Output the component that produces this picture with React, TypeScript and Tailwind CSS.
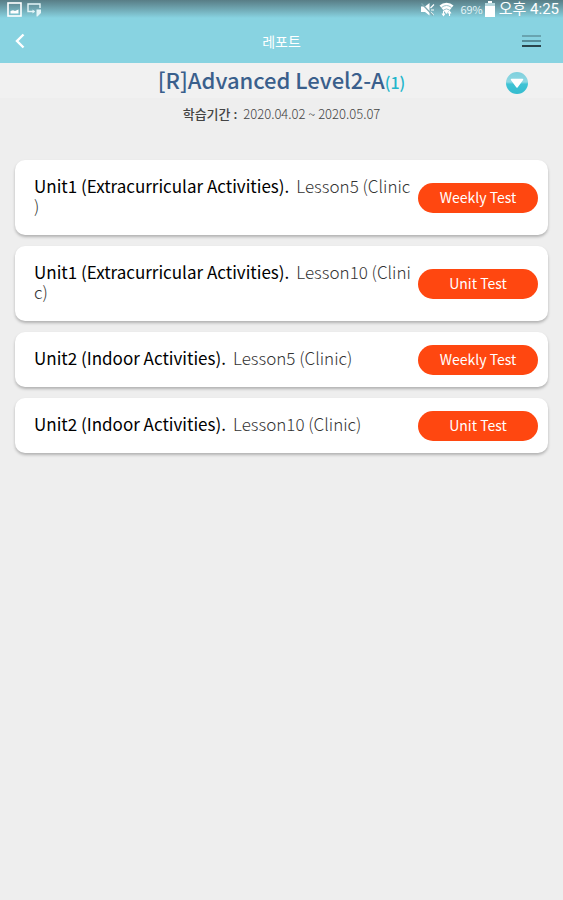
import React, { useState } from "react";

interface Report {
  id: number;
  unit: string;
  lesson: string;
  test: string;
}

const reports: Report[] = [
  { id: 1, unit: "Unit1 (Extracurricular Activities).", lesson: "Lesson5 (Clinic)", test: "Weekly Test" },
  { id: 2, unit: "Unit1 (Extracurricular Activities).", lesson: "Lesson10 (Clinic)", test: "Unit Test" },
  { id: 3, unit: "Unit2 (Indoor Activities).", lesson: "Lesson5 (Clinic)", test: "Weekly Test" },
  { id: 4, unit: "Unit2 (Indoor Activities).", lesson: "Lesson10 (Clinic)", test: "Unit Test" },
];

const StatusBar = () => (
  <div className="flex h-[18px] items-center justify-between bg-linear-to-b from-[#587d86] to-[#88d3e1] pl-[7px] pr-1 text-white">
    <div className="flex items-center gap-[5px]">
      <svg width="15" height="16" viewBox="0 0 15 16" fill="none">
        <rect x="1" y="2" width="13" height="13" stroke="#fff" strokeWidth="1.6" />
        <path d="M3.5 12.5V10l2.5-.8 2 .9L11.5 8.5v4z" fill="#fff" />
      </svg>
      <svg width="15" height="16" viewBox="0 0 15 16" fill="none">
        <path d="M13 7V3H1v7.5h6.5" stroke="#e4f5f8" strokeWidth="1.4" />
        <path d="M5.5 8.5 8 10.5l-2.5 2z" fill="#e4f5f8" />
        <path d="M9.5 8.5H14V12l-3.5 3.5h-1z" fill="#e4f5f8" />
      </svg>
    </div>
    <div className="flex items-center">
      <svg className="mr-1" width="15" height="16" viewBox="0 0 15 16" fill="none">
        <path d="M1 5.5h4L9.5 2v12.5L5 11H1z" fill="#fff" />
        <path d="M10.5 7 14 3.5M11 9h3M10.5 11l3 3" stroke="#fff" strokeWidth="1.2" />
        <path d="m1.5 2.5 11.5 12" stroke="#7ea9b2" strokeWidth="1.2" />
      </svg>
      <svg className="mr-[6px]" width="15" height="16" viewBox="0 0 15 16">
        <path d="M.5 4.5a10.5 10.5 0 0 1 14 0L7.5 13z" fill="#fff" />
        <path d="M2.5 6.5a8 8 0 0 1 10 0M4.5 9a5 5 0 0 1 6 0" fill="none" stroke="#9cc4cc" strokeWidth="1" />
        <path d="M4.5 10v4.5M3 12.5l1.5 2 1.5-2M10.5 15v-4.5M9 12.5l1.5-2 1.5 2" fill="none" stroke="#fff" strokeWidth="1.1" />
      </svg>
      <span className="mr-[2px] text-[11px] leading-4 text-[#e4f5f8]">69%</span>
      <svg className="mr-1" width="10" height="16" viewBox="0 0 10 16">
        <path d="M3 0h4v2h3v14H0V2h3z" fill="#fff" />
        <path d="M0 2h10v3H0z" fill="#b5d6dc" />
      </svg>
      <span className="font-[Roboto,'Noto_Sans_CJK_KR',sans-serif] text-[15px] leading-4">오후 4:25</span>
    </div>
  </div>
);

const ReportCard = ({ report }: { report: Report }) => (
  <li className="flex items-center gap-1 rounded-[10px] bg-white pl-[19px] pr-[10px] shadow-[0_2px_3px_rgba(0,0,0,0.25)]">
    <p className="flex-1 break-all pb-[19px] pt-4 text-[17px] leading-5 text-[#333] [line-break:anywhere]">
      <span className="mr-[7px] text-black">{report.unit}</span>
      <span className="font-light">{report.lesson}</span>
    </p>
    <button
      type="button"
      className="h-[30px] w-[120px] shrink-0 rounded-full bg-[#ff4710] pb-[2px] text-[14px] leading-5 text-white"
    >
      {report.test}
    </button>
  </li>
);

const App = () => {
  const [open, setOpen] = useState(true);

  return (
    <div className="min-h-screen bg-[#eeeeee] font-['Noto_Sans_CJK_KR',sans-serif]">
      <StatusBar />
      <header className="grid h-[45px] grid-cols-3 items-center bg-[#88d3e1] px-[14px] text-white">
        <button type="button" aria-label="Back" className="justify-self-start">
          <svg width="12" height="16" viewBox="0 0 12 16" fill="none" stroke="#fff" strokeWidth="2.4">
            <path d="M9.5 1.5 3 8l6.5 6.5" />
          </svg>
        </button>
        <h1 className="text-center text-[14px] leading-5">레포트</h1>
        <button type="button" aria-label="Menu" className="mr-[7px] justify-self-end">
          <svg width="21" height="14" viewBox="0 0 21 14">
            <path d="M1 2h19" stroke="#5f959f" strokeWidth="1.5" />
            <path d="M1 7h19" stroke="#447681" strokeWidth="1.5" />
            <path d="M1 12h19" stroke="#20343a" strokeWidth="1.8" />
          </svg>
        </button>
      </header>

      <section>
        <div className="grid h-[35px] grid-cols-[60px_1fr_60px] items-center bg-[#f1f1f1]">
          <h2 className="col-start-2 text-center text-[22px] font-medium leading-8 text-[#3a5f8c]">
            [R]Advanced Level2-A<span className="text-[16px] text-[#22b5cb]">(1)</span>
          </h2>
          <button
            type="button"
            aria-label="Toggle level"
            aria-expanded={open}
            onClick={() => setOpen(!open)}
            className="ml-[3px] mt-1 justify-self-start"
          >
            <svg className="block" width="22" height="22" viewBox="0 0 22 22">
              <defs>
                <linearGradient id="toggle" x1="0" y1="0" x2="0" y2="1">
                  <stop offset="0" stopColor="#7fd0dd" />
                  <stop offset=".45" stopColor="#8fd8e3" />
                  <stop offset=".55" stopColor="#3fc3d5" />
                  <stop offset="1" stopColor="#35bccf" />
                </linearGradient>
              </defs>
              <circle cx="11" cy="11" r="11" fill="url(#toggle)" />
              <path d="M5.5 7.5h11L11 15z" fill="#fff" stroke="#fff" strokeWidth="1.5" strokeLinejoin="round" />
            </svg>
          </button>
        </div>
        <p className="mt-[6px] text-center text-[13px] leading-5 text-[#444]">
          <span className="mr-[6px] font-medium">학습기간 :</span>
          <span className="font-light">2020.04.02 ~ 2020.05.07</span>
        </p>
      </section>

      {open && (
        <ul className="mt-9 flex flex-col gap-[11px] px-[15px] pb-6">
          {reports.map((report) => (
            <ReportCard key={report.id} report={report} />
          ))}
        </ul>
      )}
    </div>
  );
};

export default App;
